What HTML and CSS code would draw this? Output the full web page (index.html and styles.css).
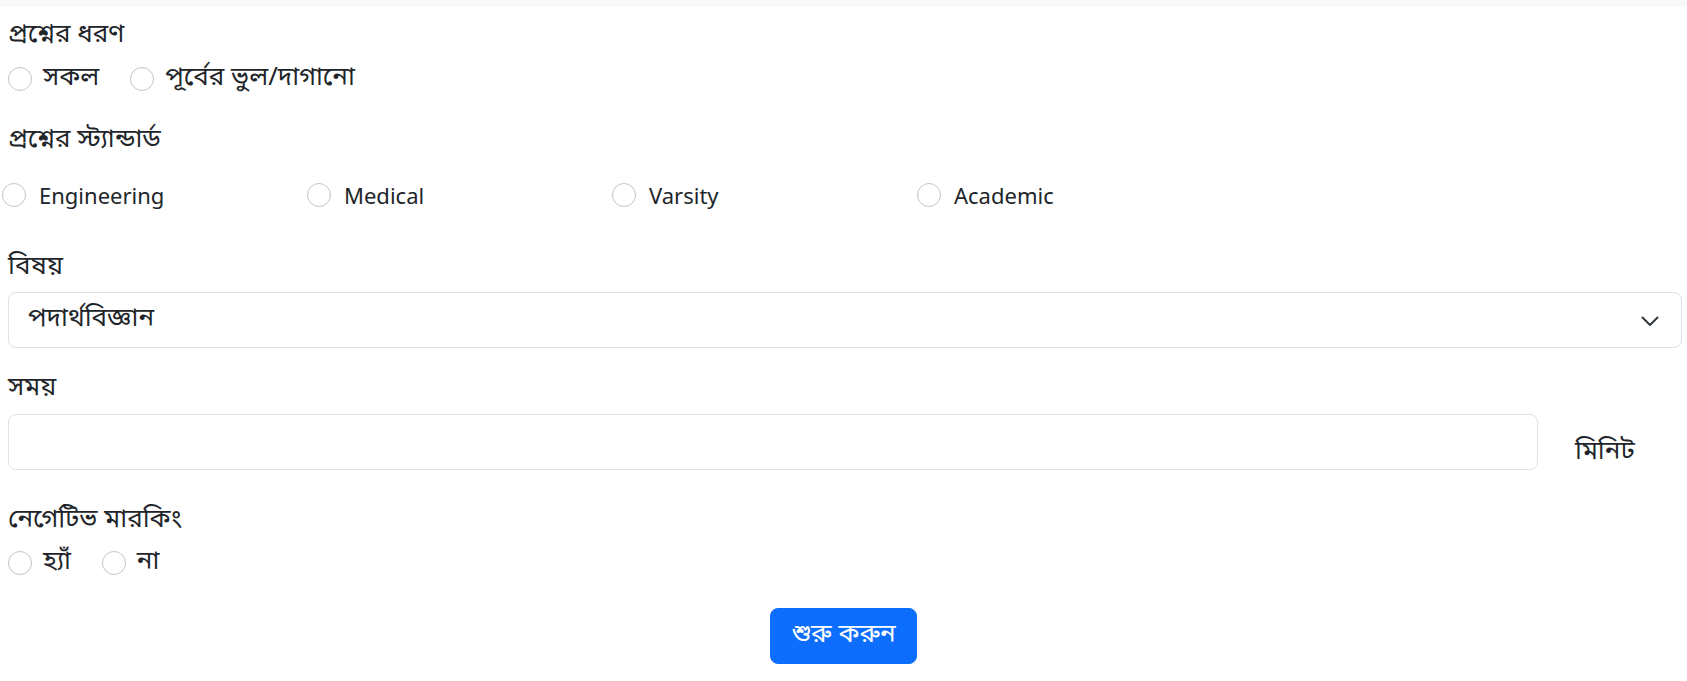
FILE: index.html
```html
<!DOCTYPE html>
<html lang="bn">
<head>
<meta charset="utf-8">
<title>Exam setup</title>
<link rel="stylesheet" href="styles.css">
</head>
<body>
<div class="topbar"></div>
<form class="form">
  <div class="group g-type">
    <div class="label">প্রশ্নের ধরণ</div>
    <div class="inline-radios r-type">
      <label class="check"><input type="radio" name="type"><span>সকল</span></label>
      <label class="check"><input type="radio" name="type"><span>পূর্বের ভুল/দাগানো</span></label>
    </div>
  </div>

  <div class="group g-std">
    <div class="label">প্রশ্নের স্ট্যান্ডার্ড</div>
    <div class="std-grid">
      <label class="check latin"><input type="radio" name="std"><span>Engineering</span></label>
      <label class="check latin"><input type="radio" name="std"><span>Medical</span></label>
      <label class="check latin"><input type="radio" name="std"><span>Varsity</span></label>
      <label class="check latin"><input type="radio" name="std"><span>Academic</span></label>
    </div>
  </div>

  <div class="group g-subject">
    <div class="label">বিষয়</div>
    <div class="select-wrap">
      <select class="select">
        <option>পদার্থবিজ্ঞান</option>
      </select>
      <svg class="chev" width="18" height="11" viewBox="0 0 18 11"><path d="M1.5 1.5 9 9l7.5-7.5" fill="none" stroke="#343a40" stroke-width="2" stroke-linecap="round" stroke-linejoin="round"/></svg>
    </div>
  </div>

  <div class="group g-time">
    <div class="label">সময়</div>
    <div class="time-row">
      <input class="input" type="text">
      <span class="unit">মিনিট</span>
    </div>
  </div>

  <div class="group g-neg">
    <div class="label">নেগেটিভ মারকিং</div>
    <div class="inline-radios r-neg">
      <label class="check"><input type="radio" name="neg"><span>হ্যাঁ</span></label>
      <label class="check"><input type="radio" name="neg"><span>না</span></label>
    </div>
  </div>

  <div class="actions">
    <button type="button" class="btn">শুরু করুন</button>
  </div>
</form>
</body>
</html>
```

FILE: styles.css
```css
* { box-sizing: border-box; }
html, body { margin: 0; padding: 0; background: #fff; }
body {
  font-family: "Vrinda", "Noto Sans Bengali", "Noto Serif Bengali", "Lohit Bengali", "FreeSerif", "Noto Sans", sans-serif;
  font-size: 26px;
  line-height: 36px;
  color: #212529;
  width: 1687px;
}
.topbar { height: 7px; background: #f8f9fa; }
.form { display: flex; flex-direction: column; padding: 10px 0 0 0; }
.group { display: flex; flex-direction: column; }
.label { padding-left: 8px; height: 36px; line-height: 38px; }

.inline-radios { display: flex; align-items: center; height: 36px; padding-left: 8px; }
.r-type { margin-top: 8px; gap: 31px; }
.check { display: flex; align-items: center; gap: 11px; cursor: pointer; }
.check input {
  appearance: none; -webkit-appearance: none;
  width: 24px; height: 24px; margin: 0;
  border: 1px solid #c4c4c4; border-radius: 50%; background: #fff;
  flex: none;
}
.g-std { margin-top: 25px; }
.std-grid {
  display: grid;
  grid-template-columns: repeat(4, 305px);
  margin-top: 19px;
  padding-left: 2px;
  height: 36px;
  align-items: center;
}
.latin { font-family: "Segoe UI", "Noto Sans", "Open Sans", sans-serif; font-size: 22px; gap: 13px; }

.g-subject { margin-top: 36px; }
.select-wrap { position: relative; margin: 7px 5px 0 8px; }
.select {
  appearance: none; -webkit-appearance: none;
  display: block; width: 100%; height: 56px;
  padding: 0 60px 0 19px;
  font: inherit; color: #212529; background: #fff;
  border: 1px solid #dee2e6; border-radius: 8px;
}
.chev { position: absolute; right: 23px; top: 24px; }

.g-time { margin-top: 22px; }
.time-row { display: flex; align-items: center; margin-top: 7px; padding-left: 8px; }
.input {
  width: 1530px; height: 56px;
  border: 1px solid #dee2e6; border-radius: 8px;
  font: inherit; padding: 0 19px; background: #fff;
}
.unit { margin-left: 37px; padding-top: 22px; }

.g-neg { margin-top: 31px; }
.r-neg { margin-top: 7px; gap: 31px; }
.actions { display: flex; justify-content: center; margin-top: 27px; }
.btn {
  font: inherit; color: #fff; background: #0d6efd;
  border: 1px solid #0d6efd; border-radius: 8px;
  width: 147px; height: 56px; padding: 0;
}
```
